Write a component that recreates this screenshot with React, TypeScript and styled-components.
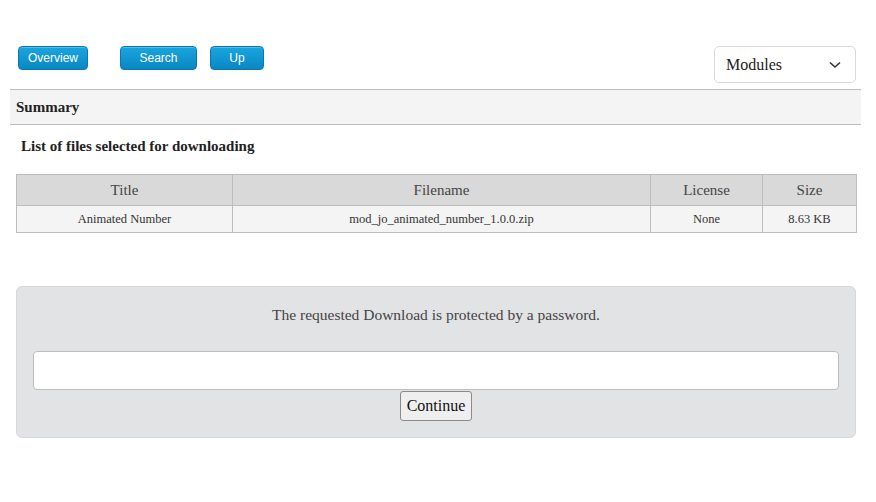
import React from "react";
import styled, { createGlobalStyle } from "styled-components";

const Global = createGlobalStyle`
  html, body { margin: 0; padding: 0; background: #fff; }
  body { font-family: "Liberation Serif", "DejaVu Serif", serif; color: #222; }
`;

const Page = styled.div`
  padding: 46px 15px 0 10px;
  width: 876px;
  box-sizing: border-box;
`;

const Toolbar = styled.div`
  display: flex;
  align-items: flex-start;
  justify-content: space-between;
  padding: 0 0 0 8px;
  margin-right: 5px;
`;

const ButtonGroup = styled.div`
  display: flex;
`;

const NavButton = styled.button<{ $w: number; $ml: number }>`
  width: ${(p) => p.$w}px;
  margin-left: ${(p) => p.$ml}px;
  height: 24px;
  border-radius: 4px;
  border: 1px solid #0878ad;
  background: linear-gradient(#1aa5dd, #0987c4);
  color: #fff;
  font-family: "Liberation Sans", Arial, sans-serif;
  font-size: 12px;
  padding: 0;
  box-shadow: inset 0 1px 0 rgba(255,255,255,0.25);
`;

const SelectBox = styled.div`
  width: 142px;
  height: 37px;
  box-sizing: border-box;
  border: 1px solid #d9d9d9;
  border-radius: 5px;
  display: flex;
  align-items: center;
  justify-content: space-between;
  padding: 0 14px 0 11px;
  font-size: 16px;
  color: #222;
  background: #fff;
`;

const SummaryBar = styled.div`
  margin-top: 6px;
  height: 36px;
  box-sizing: border-box;
  background: #f4f4f4;
  border-top: 1px solid #bdbdbd;
  border-bottom: 1px solid #bdbdbd;
  display: flex;
  align-items: center;
  padding-left: 6px;
  font-weight: bold;
  font-size: 15px;
  color: #222;
`;

const SubTitle = styled.div`
  padding: 13px 0 0 11px;
  height: 25px;
  font-weight: bold;
  font-size: 15px;
  color: #222;
`;

const Table = styled.table`
  margin: 11px 0 0 6px;
  width: 840px;
  border-collapse: collapse;
  table-layout: fixed;
`;

const Th = styled.th<{ $w: number }>`
  width: ${(p) => p.$w}px;
  background: #d9d9d9;
  border: 1px solid #bdbdbd;
  height: 31px;
  box-sizing: border-box;
  font-weight: normal;
  font-size: 15px;
  color: #444;
  padding: 0;
`;

const Td = styled.td`
  background: #f4f4f4;
  border: 1px solid #bdbdbd;
  height: 27px;
  box-sizing: border-box;
  font-size: 12.5px;
  color: #333;
  text-align: center;
  padding: 0;
`;

const PasswordPanel = styled.div`
  margin: 53px 0 0 6px;
  width: 840px;
  height: 152px;
  box-sizing: border-box;
  background: #e2e3e5;
  border: 1px solid #d6d8db;
  border-radius: 6px;
  display: flex;
  flex-direction: column;
  align-items: center;
  padding: 19px 16px 0;
`;

const Notice = styled.p`
  margin: 0;
  font-size: 15.5px;
  color: #444;
  height: 22px;
`;

const PasswordInput = styled.input`
  margin-top: 23px;
  width: 100%;
  height: 39px;
  box-sizing: border-box;
  border: 1px solid #bdbdbd;
  border-radius: 4px;
  background: #fff;
`;

const ContinueButton = styled.button`
  margin-top: 1px;
  height: 30px;
  padding: 0 6px;
  background: #efefef;
  border: 1px solid #8a8a8a;
  border-radius: 3px;
  font-family: "Liberation Serif", serif;
  font-size: 16px;
  color: #111;
`;

export default function App() {
  return (
    <>
      <Global />
      <Page>
        <Toolbar>
          <ButtonGroup>
            <NavButton $w={70} $ml={0}>Overview</NavButton>
            <NavButton $w={77} $ml={32}>Search</NavButton>
            <NavButton $w={54} $ml={13}>Up</NavButton>
          </ButtonGroup>
          <SelectBox>
            <span>Modules</span>
            <svg width="12" height="8" viewBox="0 0 12 8">
              <path d="M1 1.5 L6 6 L11 1.5" fill="none" stroke="#333" strokeWidth="1.6" />
            </svg>
          </SelectBox>
        </Toolbar>
        <SummaryBar>Summary</SummaryBar>
        <SubTitle>List of files selected for downloading</SubTitle>
        <Table>
          <thead>
            <tr>
              <Th $w={216}>Title</Th>
              <Th $w={418}>Filename</Th>
              <Th $w={112}>License</Th>
              <Th $w={94}>Size</Th>
            </tr>
          </thead>
          <tbody>
            <tr>
              <Td>Animated Number</Td>
              <Td>mod_jo_animated_number_1.0.0.zip</Td>
              <Td>None</Td>
              <Td>8.63 KB</Td>
            </tr>
          </tbody>
        </Table>
        <PasswordPanel>
          <Notice>The requested Download is protected by a password.</Notice>
          <PasswordInput type="password" />
          <ContinueButton>Continue</ContinueButton>
        </PasswordPanel>
      </Page>
    </>
  );
}
